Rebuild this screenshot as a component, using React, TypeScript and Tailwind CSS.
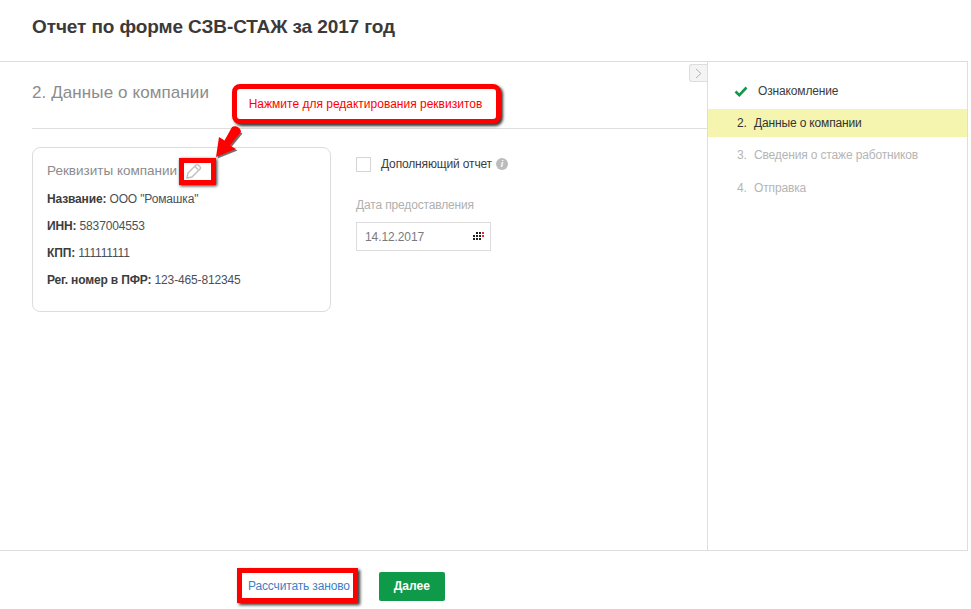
const sans = "font-['Liberation_Sans',Arial,sans-serif]";

function Requisite({ label, value }: { label: string; value: string }) {
  return (
    <p className="h-[27px] text-[12px] leading-[27px] tracking-[-0.15px] text-[#4a5058]">
      <b className="text-[#3c3c3c]">{label}:</b> {value}
    </p>
  );
}

function Step({ num, label, active, last }: { num: string; label: string; active?: boolean; last?: boolean }) {
  return (
    <li
      className={
        "flex h-[28px] items-center pl-[29px] text-[12px] tracking-[-0.15px] " +
        (active ? "bg-[#f5f5b0] text-[#333]" : "text-[#b5b5b5]") +
        (last ? " mt-[1px]" : "")
      }
    >
      <span className="w-[17px]">{num}</span>
      {label}
    </li>
  );
}

export default function App() {
  return (
    <div className={`relative flex h-[609px] w-[971px] flex-col bg-white ${sans}`}>
      <header className="flex h-[62px] w-[968px] shrink-0 items-start border-b border-[#dedede] pl-[32px] pt-[15px]">
        <h1 className="text-[19px] font-bold leading-[24px] tracking-[-0.1px] text-[#3a3a3a]">
          Отчет по форме СЗВ-СТАЖ за 2017 год
        </h1>
      </header>

      <div className="flex min-h-0 flex-1">
        <main className="relative w-[707px] shrink-0">
          <button className="absolute right-0 top-[2px] flex h-[18px] w-[18px] items-center justify-center rounded-l-[3px] border border-r-0 border-[#dddddd] bg-[#f4f4f4]">
            <svg width="7" height="11" viewBox="0 0 7 11" fill="none" stroke="#b5b5b5" strokeWidth="1">
              <path d="M1 1l5 4.5L1 10" />
            </svg>
          </button>

          <div className="ml-[32px] h-[67px] border-b border-[#dedede] pt-[20px]">
            <h2 className="text-[17px] leading-[22px] tracking-[0.1px] text-[#8c8c8c]">2. Данные о компании</h2>
          </div>

          <div className="flex pl-[32px] pt-[18px]">
            <section className="h-[165px] w-[299px] rounded-[8px] border border-[#dcdcdc] px-[14px] pt-[12px]">
              <div className="flex h-[22px] items-center gap-[9px] text-[13.5px] text-[#8c8c8c]">
                Реквизиты компании
                <svg width="16" height="16" viewBox="0 0 16 16" fill="none" stroke="#c2c2c2" strokeWidth="1.5">
                  <path d="M1 15l1-5 8-8a1.5 1.5 0 0 1 2.2 0l1.8 1.8a1.5 1.5 0 0 1 0 2.2l-8 8z" />
                  <path d="M9 3.500l3.500 3.500" />
                </svg>
              </div>
              <div className="mt-[4px]">
                <Requisite label="Название" value='ООО "Ромашка"' />
                <Requisite label="ИНН" value="5837004553" />
                <Requisite label="КПП" value="111111111" />
                <Requisite label="Рег. номер в ПФР" value="123-465-812345" />
              </div>
            </section>

            <div className="ml-[25px] pt-[9px]">
              <label className="flex h-[16px] items-center text-[12px] tracking-[-0.15px] text-[#3c3c3c]">
                <span className="mr-[10px] h-[15px] w-[15px] border border-[#d5d5d5]" />
                Дополняющий отчет
                <span className="ml-[4px] flex h-[12px] w-[12px] items-center justify-center rounded-full bg-[#bcbcbc] text-[9px] font-bold italic leading-none text-white">
                  i
                </span>
              </label>
              <p className="mt-[25px] text-[12px] leading-[16px] tracking-[-0.15px] text-[#b0b0b0]">Дата предоставления</p>
              <div className="mt-[9px] flex h-[29px] w-[135px] items-center justify-between border border-[#dcdcdc] pl-[8px] pr-[6px] text-[12px] tracking-[-0.1px] text-[#7a7a7a]">
                14.12.2017
                <svg width="11" height="9" viewBox="0 0 11 9" fill="#222" shapeRendering="crispEdges">
                  <path d="M3 0h2v2H3zM6 0h2v2H6zM0 3h2v2H0zM3 3h2v2H3zM6 3h2v2H6zM0 6h2v2H0zM3 6h2v2H3zM6 6h2v2H6z" />
                  <path fill="#e53030" d="M9 0h2v2H9zM9 3h2v2H9z" />
                </svg>
              </div>
            </div>
          </div>
        </main>

        <aside className="w-[261px] shrink-0 border-x border-[#dedede] pt-[15px]">
          <ol className="flex flex-col gap-[4px]">
            <li className="flex h-[28px] items-center pl-[26px] text-[12px] tracking-[-0.15px] text-[#3c3c3c]">
              <svg width="14" height="11" viewBox="0 0 14 11" fill="none" stroke="#0f9a4a" strokeWidth="2.6" className="mr-[10px]">
                <path d="M1.5 5.500l3.800 3.600L12.500 1.500" />
              </svg>
              Ознакомление
            </li>
            <Step num="2." label="Данные о компании" active />
            <Step num="3." label="Сведения о стаже работников" />
            <Step num="4." label="Отправка" last />
          </ol>
        </aside>
      </div>

      <footer className="flex h-[59px] w-[968px] shrink-0 items-center border-t border-[#dedede] pl-[248px] pt-[12px]">
        <a className="text-[12px] tracking-[-0.15px] text-[#3b7fc4]">Рассчитать заново</a>
        <button className="ml-[29px] h-[29px] w-[66px] rounded-[2px] bg-[#0f9a4a] text-[12px] font-bold text-white">
          Далее
        </button>
      </footer>

      {/* red callouts drawn over the page */}
      <div className="absolute left-[232px] top-[84px] flex h-[40px] w-[269px] items-center justify-center rounded-[8px] border-[5px] border-[#ff0000] bg-white pr-[2px] text-[12px] text-[#ff0000] shadow-[2px_2px_3px_#333]">
        Нажмите для редактирования реквизитов
      </div>
      <svg className="absolute left-[210px] top-[124px]" width="36" height="36" viewBox="0 0 36 36">
        <path d="M6 33 9 13 14.500 16.500 22 3 31 8 20 21.500 26 25Z" fill="#333" opacity=".7" transform="translate(1.500 1.500)" />
        <path d="M6 33 9 13 14.500 16.500 22 3C26 1 31 4 31 8L20 21.500 26 25Z" fill="#ff0000" />
      </svg>
      <div className="absolute left-[179px] top-[158px] h-[27px] w-[37px] border-[5px] border-[#ff0000] shadow-[1px_1px_3px_#333]" />
      <div className="absolute left-[237px] top-[568px] h-[35px] w-[121px] border-[5px] border-[#ff0000] shadow-[2px_2px_3px_#333]" />
    </div>
  );
}
